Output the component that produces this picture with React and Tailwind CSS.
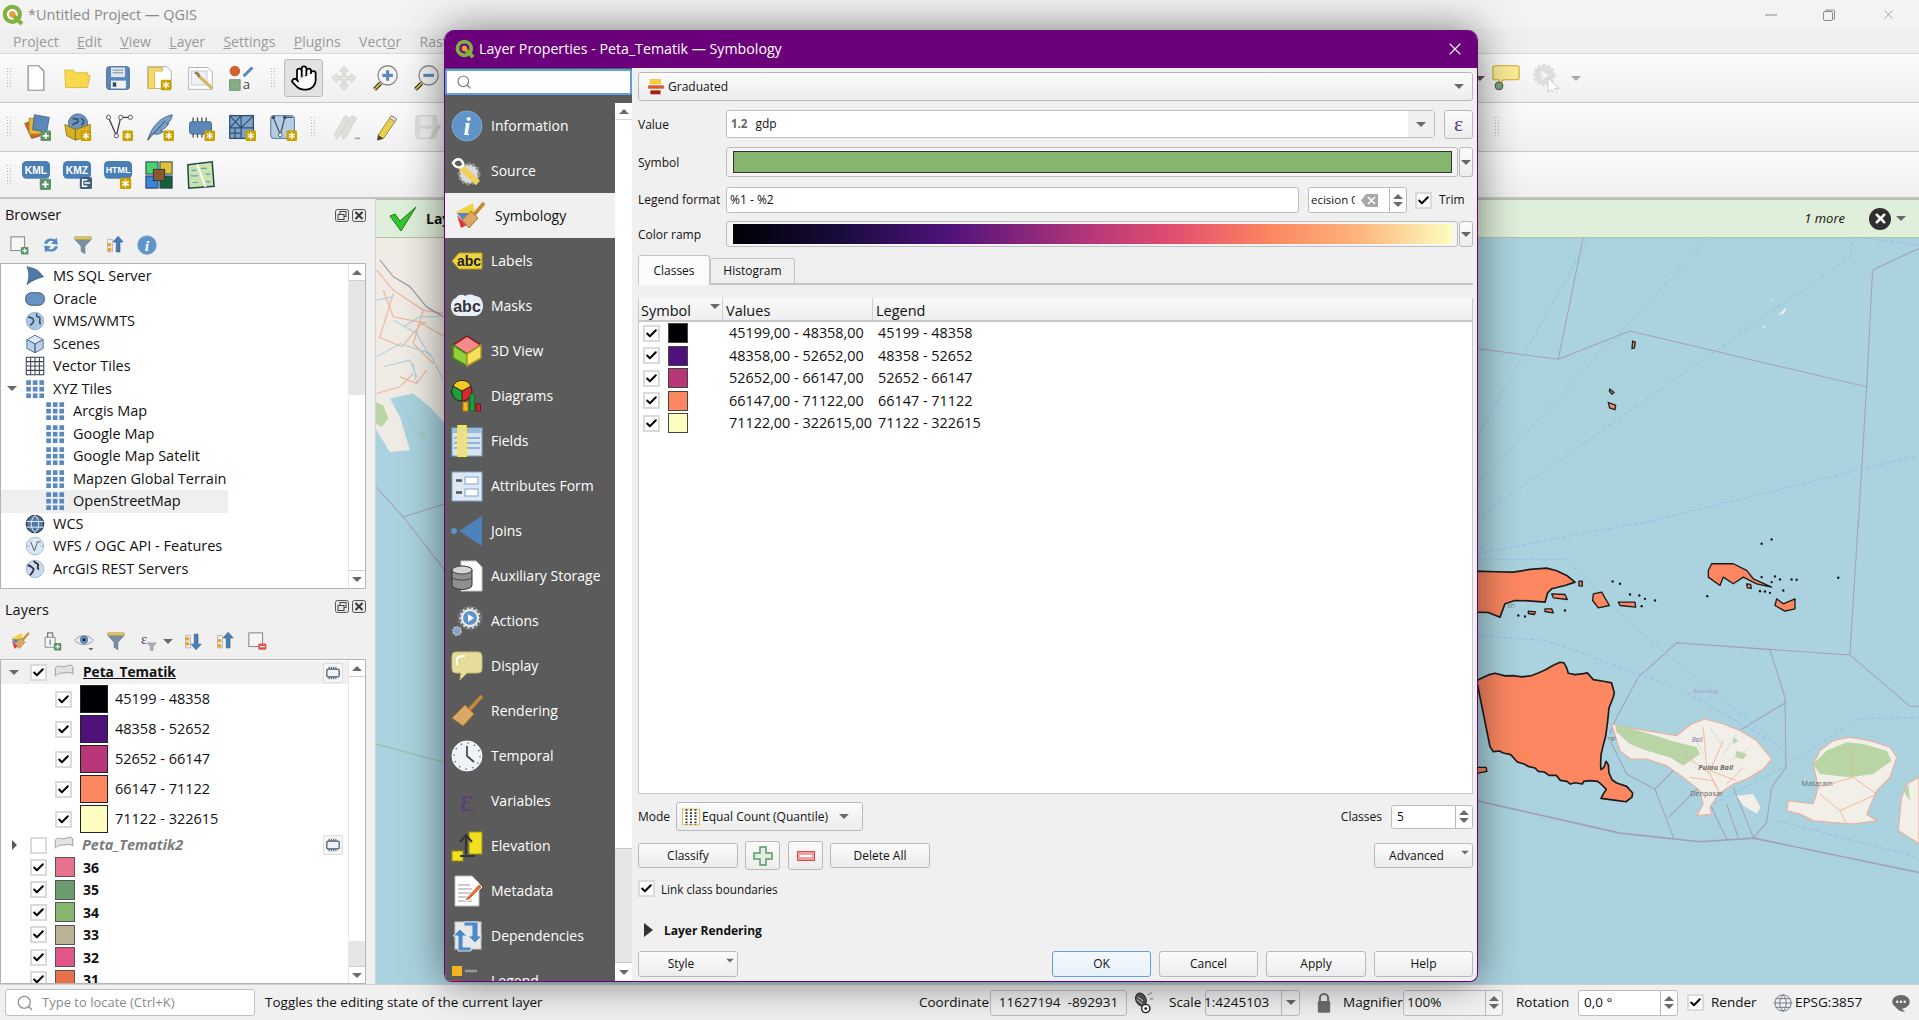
import React from 'react';
import { Hand, Check, Search, X } from 'lucide-react';

const Svg = ({ s = 28, children }) => (
  <svg width={s} height={s} viewBox="0 0 32 32" className="shrink-0">{children}</svg>
);

// small badges used on the toolbar icons
const Star = ({ x = 20, y = 20 }) => (
  <g transform={`translate(${x} ${y})`}>
    <rect width="12" height="12" rx="1.5" fill="#c9a200" />
    <path d="M6 2v8M2.5 4l7 4M9.5 4l-7 4" stroke="#fff" strokeWidth="1.6" />
  </g>
);
const Plus = ({ x = 20, y = 20 }) => (
  <g transform={`translate(${x} ${y})`}>
    <rect width="12" height="12" rx="1.5" fill="#5e9468" />
    <path d="M6 2.5v7M2.5 6h7" stroke="#fff" strokeWidth="2" />
  </g>
);

const icons = {
  newFile: <path d="M7 2h12l6 6v22H7z" fill="#fff" stroke="#8c8c8c" strokeWidth="1.4" />,
  open: <path d="M3 27 2 7h10l2 3h14v3h3l-3 14z" fill="#f9d94c" stroke="#d9b73a" />,
  save: (
    <g>
      <rect x="3" y="3" width="26" height="26" rx="3" fill="#5b88b8" stroke="#3d668f" />
      <rect x="8" y="4" width="16" height="11" fill="#dfe6ee" />
      <path d="M10 7h12M10 10h12" stroke="#6a7f95" />
      <rect x="8" y="19" width="17" height="9" fill="#f3f3f3" />
      <rect x="10" y="21" width="4" height="5" fill="#2f4e6e" />
    </g>
  ),
  print: (
    <g>
      <path d="M3 3h22l5 5v20H3z" fill="#fff" stroke="#aaa" />
      <path d="M4 4h16v4h-9v20H4z" fill="#f5d96b" stroke="#d6b23a" />
      <Star x={18} y={18} />
    </g>
  ),
  layoutMgr: (
    <g>
      <path d="M3 4h22l5 5v20H3z" fill="#fff" stroke="#aaa" />
      <rect x="6" y="8" width="18" height="16" fill="#eef3fa" stroke="#b9c8dc" />
      <path d="m11 9 4 5 15 14" stroke="#d9b866" strokeWidth="4" fill="none" />
      <path d="m10 10 4 1 1 4" stroke="#6f6f6f" strokeWidth="2" fill="none" />
    </g>
  ),
  style: (
    <g>
      <circle cx="9" cy="8" r="6" fill="#d2622f" />
      <path d="m19 14 10-10" stroke="#5b88b8" strokeWidth="3.5" />
      <rect x="3" y="18" width="12" height="12" fill="#86ad87" stroke="#648d66" />
      <text x="18" y="29" fontSize="15" fill="#444" fontFamily="Open Sans">a</text>
    </g>
  ),
  pan: (
    <path d="M16 2l5 6h-3v6h6v-3l6 5-6 5v-3h-6v6h3l-5 6-5-6h3v-6H8v3l-6-5 6-5v3h6V8h-3z" fill="#e3e3de" stroke="#cfcfcf" />
  ),
  zoomIn: (
    <g>
      <circle cx="19" cy="13" r="11" fill="#f4f4f4" stroke="#8d8d8d" strokeWidth="1.5" />
      <path d="M19 7v12M13 13h12" stroke="#5b88b8" strokeWidth="3.5" />
      <path d="m4 29 7-7" stroke="#222" strokeWidth="4.5" />
      <path d="m4 29 7-7" stroke="#e3bd3c" strokeWidth="2.2" />
    </g>
  ),
  zoomOut: (
    <g>
      <circle cx="19" cy="13" r="11" fill="#f4f4f4" stroke="#8d8d8d" strokeWidth="1.5" />
      <path d="M13 13h12" stroke="#5b88b8" strokeWidth="3.5" />
      <path d="m4 29 7-7" stroke="#222" strokeWidth="4.5" />
      <path d="m4 29 7-7" stroke="#e3bd3c" strokeWidth="2.2" />
    </g>
  ),
  addLayer: (
    <g>
      <path d="m2 12 12-4 6 18-10 3z" fill="#d2622f" stroke="#a34a22" />
      <rect x="7" y="6" width="14" height="18" fill="#e3b931" stroke="#b08f20" />
      <path d="m13 2 17 3-3 17-16-3z" fill="#5b88b8" stroke="#3d668f" />
      <Plus />
    </g>
  ),
  box: (
    <g>
      <circle cx="16" cy="12" r="11" fill="#6f93bf" stroke="#3d668f" />
      <path d="M10 6c3 2 6-1 6 3s-5 1-6 5M20 6c3 3 4 4 0 8" stroke="#34506f" strokeWidth="2" fill="none" />
      <path d="M1 13l12 6v12L3 26zM13 19l17-6v13L13 31z" fill="#d9b122" stroke="#8d7310" />
      <Star x={19} y={20} />
    </g>
  ),
  vertex: (
    <g>
      <path d="M4 5l9 21 5-21h11" stroke="#444" strokeWidth="1.5" fill="none" />
      <circle cx="4" cy="5" r="2.4" fill="#fff" stroke="#444" />
      <circle cx="13" cy="26" r="2.4" fill="#fff" stroke="#444" />
      <circle cx="18" cy="5" r="2.4" fill="#fff" stroke="#444" />
      <circle cx="29" cy="5" r="2.4" fill="#fff" stroke="#444" />
      <Star x={20} y={20} />
    </g>
  ),
  feather: (
    <g>
      <path d="M2 31C6 16 16 5 30 2c-1 7-4 9-7 10l3 0c-3 5-6 7-10 8l4 1c-5 4-9 4-13 2z" fill="#7ca0c9" stroke="#3d668f" />
      <path d="M2 31 22 9" stroke="#24405f" />
      <Star x={20} y={20} />
    </g>
  ),
  chip: (
    <g>
      <rect x="3" y="10" width="25" height="14" rx="2" fill="#5b88b8" stroke="#3d668f" />
      <path d="M7 5v5M12 5v5M17 5v5M22 5v5M7 24v4M12 24v4M17 24v4" stroke="#444" strokeWidth="1.4" />
      <Star x={20} y={20} />
    </g>
  ),
  mesh: (
    <g>
      <rect x="2" y="3" width="27" height="26" fill="#7ea3c9" stroke="#2e4f73" strokeWidth="1.5" />
      <path d="M2 17h27M15 3v26M2 3l13 14M15 3 2 17M15 17 29 3M2 23h13M8 17v12" stroke="#2e4f73" strokeWidth="1.4" />
      <Star x={20} y={20} />
    </g>
  ),
  virtual: (
    <g>
      <rect x="2" y="3" width="27" height="26" rx="3" fill="#b6cce3" stroke="#3d668f" />
      <path d="M5 5l8 20 5-20h9" stroke="#3d4f63" strokeWidth="1.4" fill="none" />
      <circle cx="5" cy="5" r="2" fill="#3d4f63" />
      <circle cx="13" cy="25" r="2.2" fill="#fff" stroke="#3d4f63" />
      <circle cx="18" cy="5" r="2" fill="#3d4f63" />
      <Star x={20} y={20} />
    </g>
  ),
  editAll: (
    <g>
      <path d="M5 30 3 24 15 3l5 3L8 27zM13 30l-2-6L23 3l5 3-12 21z" fill="#dfdfdc" stroke="#d0d0cc" />
      <path d="M26 29h6" stroke="#a8a8a8" strokeWidth="2" />
    </g>
  ),
  pencil: (
    <g>
      <path d="M6 25 21 3l6 4-15 22-7 2z" fill="#ecd04d" stroke="#8b7a29" />
      <path d="m21 3 6 4-2 3-6-4z" fill="#ddd" stroke="#888" />
      <path d="M5 31l1-6 6 4z" fill="#444" />
    </g>
  ),
  saveEdits: (
    <g>
      <rect x="2" y="3" width="24" height="26" rx="3" fill="#e2e2e0" stroke="#d2d2d0" />
      <rect x="7" y="4" width="14" height="10" fill="#f3f3f3" />
      <rect x="7" y="18" width="14" height="10" fill="#f3f3f3" />
      <path d="m18 30 2-6 8-11 3 2-9 12z" fill="#d4d2cb" />
    </g>
  ),
  kml: (
    <g>
      <rect x="1" y="1" width="30" height="19" rx="5" fill="#4a7fb5" />
      <text x="16" y="15" fontSize="11" fontWeight="700" textAnchor="middle" fill="#fff" fontFamily="Liberation Sans">KML</text>
      <Plus x={20} y={20} />
    </g>
  ),
  kmz: (
    <g>
      <rect x="1" y="1" width="30" height="19" rx="5" fill="#4a7fb5" />
      <text x="16" y="15" fontSize="11" fontWeight="700" textAnchor="middle" fill="#fff" fontFamily="Liberation Sans">KMZ</text>
      <rect x="19" y="18" width="13" height="13" rx="2" fill="#3f5f7f" />
      <path d="M27 21h-5v7h5M24 24.500h6" stroke="#fff" strokeWidth="1.6" fill="none" />
    </g>
  ),
  html: (
    <g>
      <rect x="1" y="1" width="30" height="19" rx="5" fill="#4a7fb5" />
      <text x="16" y="14" fontSize="9.500" fontWeight="700" textAnchor="middle" fill="#fff" fontFamily="Liberation Sans">HTML</text>
      <Star x={18} y={19} />
    </g>
  ),
  quad: (
    <g>
      <rect x="2" y="2" width="13" height="13" fill="#4fd06a" stroke="#22384f" />
      <rect x="17" y="2" width="13" height="13" fill="#e0c23b" stroke="#22384f" />
      <rect x="2" y="17" width="13" height="13" fill="#3a83d6" stroke="#22384f" />
      <rect x="17" y="17" width="13" height="13" fill="#16603a" stroke="#22384f" />
      <rect x="10" y="10" width="12" height="12" fill="#8a5a2e" stroke="#22384f" />
    </g>
  ),
  mapGrid: (
    <g>
      <path d="m3 5 26-3 2 26-27 2z" fill="#c9e3a9" stroke="#22474f" strokeWidth="1.6" />
      <path d="m13 5 9 24" stroke="#fff" strokeWidth="2" />
      <path d="M7 11h5M17 9h6M6 17h8M22 15h5M8 24h6M22 23h5" stroke="#54a0d0" strokeWidth="1.3" />
    </g>
  ),
  comment: (
    <g>
      <path d="M3 2h26a2 2 0 0 1 2 2v12a2 2 0 0 1-2 2H13l-5 5v-5H3a2 2 0 0 1-2-2V4a2 2 0 0 1 2-2z" fill="#faeb98" stroke="#cfa92c" strokeWidth="1.3" />
      <circle cx="8" cy="25" r="4.500" fill="#76a878" stroke="#444" />
    </g>
  ),
  gearRun: (
    <g>
      <circle cx="13" cy="13" r="10" fill="#dcdee2" stroke="#dcdcdc" strokeWidth="4" strokeDasharray="3 2" />
      <path d="m10 8 8 5-8 5z" fill="#f4f4f4" />
      <path d="m17 16 12 11-5 0 3 5-3 1-3-5-4 3z" fill="#fff" stroke="#c8c8c8" />
    </g>
  ),
  newLayer: (
    <g>
      <rect x="3" y="3" width="22" height="22" fill="#f6f6f6" stroke="#7d7d7d" strokeWidth="1.5" />
      <Plus x={19} y={19} />
    </g>
  ),
  removeLayer: (
    <g>
      <rect x="3" y="3" width="22" height="22" fill="#f6f6f6" stroke="#7d7d7d" strokeWidth="1.5" />
      <rect x="18" y="20" width="13" height="10" rx="2" fill="#e2504f" />
      <path d="M20.500 25h8" stroke="#fff" strokeWidth="2" />
    </g>
  ),
  addGroup: (
    <g>
      <path d="M5 10h16v16H5z" fill="#f2f2f2" stroke="#8a8a8a" strokeWidth="1.500" />
      <path d="M9 10V3h8v7M13 14v8" stroke="#6a7d90" strokeWidth="2" fill="none" />
      <Plus x={19} y={19} />
    </g>
  ),
  eye: (
    <g>
      <path d="M1 15c8-10 22-10 30 0-8 9-22 9-30 0z" fill="#e9edf1" stroke="#9a9a9a" strokeWidth="1.500" />
      <circle cx="16" cy="14" r="6" fill="#5f93c9" stroke="#3f5f7f" />
      <circle cx="16" cy="14" r="2.500" fill="#222" />
      <path d="M23 27h8l-4 4z" fill="#666" />
    </g>
  ),
  exprFilter: (
    <g>
      <text x="10" y="20" fontSize="24" textAnchor="middle" fill="#5c3a7e" fontFamily="Liberation Serif">ε</text>
      <path d="M15 19h14l-5 6v6h-4v-6z" fill="#b2b2b2" stroke="#8c8c8c" />
    </g>
  ),
  refresh: (
    <g>
      <path d="M5 14C6 7 14 3 22 7l3-3 2 11-11-1 4-4c-4-2-8-1-10 4z" fill="#4f8ac7" />
      <path d="M27 18c-1 7-9 11-17 7l-3 3-2-11 11 1-4 4c4 2 8 1 10-4z" fill="#4f8ac7" />
    </g>
  ),
  filter: (
    <g>
      <path d="M3 3h26v4L19 18v12l-6-4v-8L3 7z" fill="#7b8fa3" stroke="#5a6c7e" />
      <rect x="3" y="3" width="26" height="4" fill="#e7c43a" />
    </g>
  ),
  collapse: (
    <g>
      <path d="M4 7h8v20H4z" fill="#eee" stroke="#a0a0a0" />
      <rect x="4" y="13" width="6" height="5" fill="#eaa32a" />
      <rect x="4" y="21" width="6" height="5" fill="#eaa32a" />
      <path d="M21 2l8 9h-5v16h-6V11h-5z" fill="#4a7fb5" stroke="#2f5a85" />
    </g>
  ),
  expand: (
    <g>
      <path d="M4 7h8v20H4z" fill="#eee" stroke="#a0a0a0" />
      <rect x="4" y="10" width="6" height="5" fill="#eaa32a" />
      <rect x="4" y="18" width="6" height="5" fill="#eaa32a" />
      <path d="M21 30l8-9h-5V5h-6v16h-5z" fill="#4a7fb5" stroke="#2f5a85" />
    </g>
  ),
  info: (
    <g>
      <circle cx="16" cy="16" r="15" fill="#5f93c9" stroke="#87a9cc" />
      <text x="16" y="25" fontSize="25" fontWeight="700" fontStyle="italic" textAnchor="middle" fill="#fff" fontFamily="Liberation Serif">i</text>
    </g>
  ),
  source: (
    <g>
      <circle cx="18" cy="19" r="10" fill="#dadada" stroke="#8d8d8d" strokeWidth="3" strokeDasharray="3 2" />
      <path d="m10 12 17 16" stroke="#f0d055" strokeWidth="6" />
      <path d="M2 8c3-5 8-5 10 0 1 2 0 3-2 4-4 1-6 0-8-4z" fill="none" stroke="#fff" strokeWidth="2.5" />
    </g>
  ),
  brush: (
    <g>
      <path d="M2 12 19 3l2 12-9 10z" fill="#eed53f" />
      <path d="M3 13l15 0-6 12z" fill="#5a84c7" />
      <path d="M3 15l9 10 5-2-10 5z" fill="#e2333c" />
      <path d="m19 16 11-13" stroke="#c98932" strokeWidth="3.5" />
      <path d="m8 20 9-9 7 7-9 10z" fill="#dba767" stroke="#a9762f" />
    </g>
  ),
  labels: (
    <g>
      <path d="M1 16 8 8h23v16H8z" fill="#eed53f" stroke="#b59a1d" />
      <text x="18" y="21" fontSize="14" fontWeight="700" textAnchor="middle" fill="#222" fontFamily="Liberation Sans">abc</text>
    </g>
  ),
  masks: (
    <g>
      <path d="M5 8c2-4 7-4 9-2 3-2 7-2 10 0 5 0 8 4 8 10s-4 10-8 10H8c-5 0-8-4-8-10 0-4 2-7 5-8z" fill="#eaf0fb" />
      <text x="16" y="22" fontSize="16" fontWeight="700" textAnchor="middle" fill="#333" fontFamily="Liberation Sans">abc</text>
    </g>
  ),
  view3d: (
    <g>
      <path d="M16 1 30 10 16 19 2 10z" fill="#f58a8a" stroke="#8b1a1a" strokeWidth="1.5" />
      <path d="M2 10l14 9v12L2 23z" fill="#8fd13c" stroke="#4e7f1a" strokeWidth="1.5" />
      <path d="m30 10-14 9v12l14-8z" fill="#f6e257" stroke="#b3952a" strokeWidth="1.5" />
    </g>
  ),
  diagrams: (
    <g>
      <circle cx="11" cy="11" r="10" fill="#d92a2a" stroke="#222" />
      <path d="M11 11 2 6a10 10 0 0 0 9 15z" fill="#1f9e3f" stroke="#222" />
      <path d="M11 11 2 6a10 10 0 0 1 18 0z" fill="#f3cb22" stroke="#222" />
      <rect x="12" y="22" width="5" height="9" fill="#f3b61f" stroke="#a87d10" />
      <rect x="19" y="14" width="4.500" height="17" fill="#1f9e3f" stroke="#0f6a27" />
      <rect x="25" y="24" width="4.500" height="7" fill="#c3272b" stroke="#7c1518" />
    </g>
  ),
  fields: (
    <g>
      <rect x="1" y="3" width="30" height="28" fill="#d6e3f2" stroke="#7da3cc" />
      <rect x="1" y="3" width="30" height="5" fill="#9cbadb" />
      <path d="M15 13h14M15 18h14M15 23h14M3 13h3M3 18h3M3 23h3" stroke="#7da3cc" strokeWidth="1.4" />
      <rect x="7" y="0.500" width="8" height="31" fill="#ecdd96" stroke="#f5ee3d" strokeWidth="1.6" />
    </g>
  ),
  attrForm: (
    <g>
      <rect x="1" y="2" width="30" height="29" fill="#dde8f4" stroke="#7da3cc" />
      <rect x="14" y="7" width="13" height="7" fill="#fff" stroke="#7da3cc" />
      <rect x="14" y="19" width="13" height="7" fill="#fff" stroke="#7da3cc" />
      <path d="M5 10.500h6M5 22.500h6" stroke="#4a5560" strokeWidth="2.6" />
    </g>
  ),
  joins: (
    <g>
      <path d="M31 1v30L8 16z" fill="#4f82bd" />
      <circle cx="3" cy="16" r="3" fill="#5f93c9" />
    </g>
  ),
  aux: (
    <g>
      <path d="M10 1h15l6 6v24H10z" fill="#fff" stroke="#c8c8c8" />
      <path d="M1 10c0-5 20-5 20 0v15c0 6-20 6-20 0z" fill="#8f8f8f" stroke="#333" />
      <ellipse cx="11" cy="10" rx="10" ry="4" fill="#d4d4d4" stroke="#444" />
      <path d="M1 17c0 4 20 4 20 0" fill="none" stroke="#444" />
    </g>
  ),
  actions: (
    <g>
      <circle cx="19" cy="13" r="11" fill="#dcdcdc" stroke="#6e6e6e" strokeWidth="3.500" strokeDasharray="3 2" />
      <circle cx="19" cy="13" r="7.500" fill="#5f93c9" stroke="#fff" />
      <path d="m17 9 6 4-6 4z" fill="#fff" />
      <circle cx="6" cy="26" r="4" fill="#7fa4cc" stroke="#bbb" strokeWidth="2" strokeDasharray="2 1" />
    </g>
  ),
  display: (
    <g>
      <path d="M5 2h22a4 4 0 0 1 4 4v13a4 4 0 0 1-4 4H16l-7 7 1-7H5a4 4 0 0 1-4-4V6a4 4 0 0 1 4-4z" fill="#e6dc9b" stroke="#c6ba72" />
      <path d="M6 15V9c0-2 2-3 8-3" stroke="#fff" strokeWidth="2" fill="none" />
    </g>
  ),
  rendering: (
    <g>
      <path d="m18 15 13-14" stroke="#c98932" strokeWidth="3.500" />
      <path d="m1 23 13-13 9 9-11 12z" fill="#dba767" stroke="#a9762f" />
    </g>
  ),
  clock: (
    <g>
      <circle cx="16" cy="16" r="15" fill="#eff3f8" stroke="#fff" />
      <circle cx="16" cy="16" r="13" fill="none" stroke="#5f7fa8" strokeWidth="1.5" strokeDasharray="1.5 5.300" />
      <path d="M16 6v10l7 6" stroke="#444" strokeWidth="1.700" fill="none" />
    </g>
  ),
  variables: (
    <text x="16" y="26" fontSize="32" textAnchor="middle" fill="#5c3a7e" fontFamily="Liberation Serif">ε</text>
  ),
  elevation: (
    <g>
      <rect x="18" y="2" width="13" height="22" fill="#f2df1e" stroke="#a08d10" />
      <rect x="1" y="21" width="11" height="10" fill="#f2df1e" stroke="#a08d10" />
      <path d="M15 24V6M9 12l6-7 6 7M9 26h15" stroke="#333" strokeWidth="2" fill="none" />
    </g>
  ),
  metadata: (
    <g>
      <path d="M4 1h17l7 7v23H4z" fill="#fff" stroke="#bbb" />
      <path d="M7 10h12M7 14h14M7 18h14M7 22h10M7 26h14" stroke="#999" strokeWidth="1.2" />
      <path d="m15 23 13-14 3 3-13 13-4 1z" fill="#e0703a" stroke="#fff" />
    </g>
  ),
  deps: (
    <g>
      <rect x="4" y="2" width="26" height="27" fill="#e8e8e8" stroke="#c8c8c8" />
      <path d="M7 31V16H2l7-7 7 7h-4v11h8v4z" fill="#4f8ac7" stroke="#d7e6f5" />
      <path d="M27 2v14h4l-7 7-7-7h4V6h-8V2z" fill="#4f8ac7" stroke="#d7e6f5" />
    </g>
  ),
  legend: (
    <g>
      <rect x="1" y="1" width="10" height="10" fill="#f3b61f" />
      <path d="M14 6h12M14 20h12" stroke="#999" strokeWidth="2.500" />
      <rect x="1" y="15" width="10" height="10" fill="#e0401c" />
    </g>
  ),
  mssql: <path d="M3 1c8 2 18 4 22 11 3 4 4 4 5 5-9 2-19 6-27 13 3-9 5-19 0-29z" fill="#4f79a8" stroke="#2f5178" />,
  oracle: <rect x="1" y="6" width="30" height="20" rx="9" fill="#6a92c1" stroke="#2f5178" strokeWidth="1.5" />,
  wms: (
    <g>
      <circle cx="16" cy="16" r="14" fill="#a9c6e5" stroke="#7c9cc0" />
      <path d="M5 9c4 3 5 0 8 4s-2 8-5 10M19 4c-2 5 1 5 4 6s-2 9 2 11" stroke="#3b4a58" strokeWidth="2.500" fill="none" />
    </g>
  ),
  scenes: (
    <g>
      <path d="M16 2 29 9 16 16 3 9z" fill="#dfe9f4" stroke="#4c6a8a" strokeWidth="1.5" />
      <path d="M3 9l13 7v14L3 23zM29 9l-13 7v14l13-7z" fill="#bcd1e8" stroke="#4c6a8a" strokeWidth="1.5" />
    </g>
  ),
  vtiles: (
    <g fill="none" stroke="#3b4653" strokeWidth="1.7">
      <rect x="2" y="2" width="28" height="28" />
      <path d="M9 2v28M16 2v28M23 2v28M2 9h28M2 16h28M2 23h28" />
    </g>
  ),
  xyz: (
    <g fill="#5b88c0">
      {[2, 12.500, 23].map((x) =>
        [2, 12.500, 23].map((y) => <rect key={`${x}-${y}`} x={x} y={y} width="7.500" height="7.500" />)
      )}
    </g>
  ),
  wcs: (
    <g>
      <circle cx="16" cy="16" r="14" fill="#4f79a8" stroke="#28323c" strokeWidth="1.8" />
      <path d="M2 12h28M2 21h28M16 2c-8 8-8 20 0 28M16 2c8 8 8 20 0 28" stroke="#e9eef5" strokeWidth="1.6" fill="none" />
    </g>
  ),
  wfs: (
    <g>
      <circle cx="16" cy="16" r="14" fill="#dbe8f5" stroke="#7c9cc0" />
      <path d="m9 9 6 15 5-15 5 1" stroke="#55636f" strokeWidth="1.6" fill="none" />
      <path d="M2 16h6M24 16h6" stroke="#7c9cc0" />
    </g>
  ),
  arcgis: (
    <g>
      <circle cx="16" cy="16" r="14" fill="#c9dcf0" stroke="#7c9cc0" />
      <path d="M4 10c5 0 6 3 9 5s-4 10-5 11M14 3c2 4 6 3 7 6s-3 3 1 8" stroke="#333" strokeWidth="3" fill="none" />
    </g>
  ),
  polygon: <path d="M2 8c5-6 9-1 14-2s11-5 14 0v12c-3-5-9-2-14-2s-9 0-14 5z" fill="#e2e2e2" stroke="#9b9b9b" strokeWidth="1.500" />,
  chipSmall: (
    <g>
      <rect x="5" y="9" width="22" height="14" rx="2.500" fill="#eef3f7" stroke="#4b5a69" strokeWidth="2.200" />
      <path d="M9 5v4M13 5v4M17 5v4M21 5v4M9 23v4M13 23v4M17 23v4M21 23v4" stroke="#4b5a69" strokeWidth="1.800" />
    </g>
  ),
  mouseOff: (
    <g>
      <ellipse cx="13" cy="11" rx="7.500" ry="10" transform="rotate(-25 13 11)" fill="#555" stroke="#111" />
      <path d="M8 7l8 6M7 11l8 6" stroke="#eee" strokeWidth="1.300" />
      <circle cx="20" cy="24" r="6" fill="#fff" stroke="#222" strokeWidth="2" />
      <circle cx="20" cy="24" r="2" fill="#222" />
      <path d="M23 4l6-3M26 10l5 0" stroke="#444" />
    </g>
  ),
  lock: (
    <g>
      <rect x="7" y="13" width="18" height="17" rx="2" fill="#6d6d6d" />
      <path d="M10 14V9a6 6 0 0 1 12 0v5" fill="none" stroke="#6d6d6d" strokeWidth="3" />
    </g>
  ),
  globe: (
    <g fill="none" stroke="#6c7782" strokeWidth="1.500">
      <circle cx="16" cy="16" r="13" />
      <path d="M1 16h30M4 9h24M4 23h24M16 3c-7 7-7 19 0 26M16 3c7 7 7 19 0 26" />
    </g>
  ),
  chat: (
    <g>
      <path d="M16 3c8 0 14 5 14 11s-6 11-13 11l6 5c-7 0-12-3-15-7-3-2-6-5-6-9C2 8 8 3 16 3z" fill="#6a6a6a" />
      <circle cx="10" cy="14" r="2" fill="#fff" />
      <circle cx="16" cy="14" r="2" fill="#fff" />
      <circle cx="22" cy="14" r="2" fill="#fff" />
    </g>
  ),
  graduated: (
    <g>
      <rect x="6" y="3" width="18" height="7" fill="#f7d02c" stroke="#e8a91c" />
      <rect x="2" y="13" width="28" height="6" fill="#e3561f" />
      <rect x="6" y="22" width="18" height="7" fill="#a81b13" />
    </g>
  ),
  quantile: (
    <g>
      <rect x="1" y="2" width="30" height="28" fill="#fff" stroke="#d4b52a" strokeWidth="1.500" />
      <path d="M8 2v28M16 2v28M24 2v28" stroke="#2f2f2f" strokeWidth="3.500" strokeDasharray="3 2.500" />
    </g>
  ),
};

const Icon = ({ name, s = 28 }) => <Svg s={s}>{icons[name]}</Svg>;

const Grip = () => (
  <div className="w-[5px] h-[22px] shrink-0 bg-[radial-gradient(#b4b4b4_1px,transparent_1px)] bg-[length:3px_3px]" />
);

const Arrow = ({ dir = 'down', color = 'border-t-[#6a6a6a]' }) =>
  dir === 'down' ? (
    <span className={`block w-0 h-0 border-x-[5px] border-x-transparent border-t-[5px] ${color}`} />
  ) : dir === 'up' ? (
    <span className="block w-0 h-0 border-x-[5px] border-x-transparent border-b-[5px] border-b-[#6a6a6a]" />
  ) : (
    <span className="block w-0 h-0 border-y-[5px] border-y-transparent border-l-[5px] border-l-[#5a5a5a]" />
  );

const Tool = ({ name, s = 28 }) => (
  <div className="w-[41px] shrink-0 flex justify-center items-center">
    <Icon name={name} s={s} />
  </div>
);

const CheckBox = ({ on = true, s = 'w-[17px] h-[17px]' }) => (
  <span className={`${s} shrink-0 bg-white border-2 border-[#dadada] flex items-center justify-center`}>
    {on && <Check size={15} strokeWidth={3.6} className="text-black" />}
  </span>
);

const Btn = ({ className = '', children }) => (
  <div className={`flex items-center justify-center shrink-0 border border-[#b9b9b9] rounded-[3px] bg-linear-to-b from-[#fbfbfb] to-[#ededed] text-[12px] text-[#111] ${className}`}>
    {children}
  </div>
);

const Spin = () => (
  <div className="w-[17px] h-full border-l border-[#b9b9b9] flex flex-col items-center justify-center gap-[3px] shrink-0">
    <Arrow dir="up" />
    <Arrow />
  </div>
);

const browserRows = [
  ['mssql', 'MS SQL Server', 0],
  ['oracle', 'Oracle', 0],
  ['wms', 'WMS/WMTS', 0],
  ['scenes', 'Scenes', 0],
  ['vtiles', 'Vector Tiles', 0],
  ['xyz', 'XYZ Tiles', 0, true],
  ['xyz', 'Arcgis Map', 1],
  ['xyz', 'Google Map', 1],
  ['xyz', 'Google Map Satelit', 1],
  ['xyz', 'Mapzen Global Terrain', 1],
  ['xyz', 'OpenStreetMap', 1],
  ['wcs', 'WCS', 0],
  ['wfs', 'WFS / OGC API - Features', 0],
  ['arcgis', 'ArcGIS REST Servers', 0],
];

const classes = [
  ['#000004', '45199,00 - 48358,00', '45199 - 48358'],
  ['#4f127b', '48358,00 - 52652,00', '48358 - 52652'],
  ['#b73779', '52652,00 - 66147,00', '52652 - 66147'],
  ['#fc8761', '66147,00 - 71122,00', '66147 - 71122'],
  ['#fcfdbf', '71122,00 - 322615,00', '71122 - 322615'],
];

const layerRows = [
  ['#e8718d', '36'],
  ['#6e9a6f', '35'],
  ['#86b56f', '34'],
  ['#bcb295', '33'],
  ['#e0568a', '32'],
  ['#e8734a', '31'],
];

const pages = [
  ['info', 'Information'],
  ['source', 'Source'],
  ['brush', 'Symbology'],
  ['labels', 'Labels'],
  ['masks', 'Masks'],
  ['view3d', '3D View'],
  ['diagrams', 'Diagrams'],
  ['fields', 'Fields'],
  ['attrForm', 'Attributes Form'],
  ['joins', 'Joins'],
  ['aux', 'Auxiliary Storage'],
  ['actions', 'Actions'],
  ['display', 'Display'],
  ['rendering', 'Rendering'],
  ['clock', 'Temporal'],
  ['variables', 'Variables'],
  ['elevation', 'Elevation'],
  ['metadata', 'Metadata'],
  ['deps', 'Dependencies'],
  ['legend', 'Legend'],
];

const QgisLogo = ({ s = 20 }) => (
  <svg width={s} height={s} viewBox="0 0 32 32" className="shrink-0">
    <circle cx="15" cy="15" r="11" fill="none" stroke="#7fb241" strokeWidth="6" />
    <path d="m17 17 12 12" stroke="#7fb241" strokeWidth="6" />
    <circle cx="15" cy="15" r="4.500" fill="#ef9a2d" />
  </svg>
);

const DockButtons = () => (
  <div className="flex gap-[3px] ml-auto">
    <svg width="14" height="13" viewBox="0 0 14 13">
      <rect x=".5" y=".5" width="13" height="12" rx="2" fill="#e8e8e8" stroke="#555" />
      <rect x="5" y="2.500" width="6" height="5" fill="none" stroke="#444" />
      <rect x="3" y="5.500" width="6" height="5" fill="#e8e8e8" stroke="#444" />
    </svg>
    <svg width="14" height="13" viewBox="0 0 14 13">
      <rect x=".5" y=".5" width="13" height="12" rx="2" fill="#e8e8e8" stroke="#555" />
      <path d="m3.500 3 7 7M10.500 3l-7 7" stroke="#333" strokeWidth="1.800" />
    </svg>
  </div>
);

function MapCanvas() {
  const line = { fill: 'none', stroke: '#a59db8', strokeWidth: 5 };
  const dash = { fill: 'none', stroke: '#93b8e6', strokeWidth: 2.5, strokeDasharray: '12 8' };
  const fine = { fill: 'none', stroke: '#a59db8', strokeWidth: 3 };
  const land = { fill: '#fc8761', stroke: '#1c1c1c', strokeWidth: 5, strokeLinejoin: 'round' };
  const dots = [[145,285],[165,288],[285,270],[428,183],[450,190],[480,222],[508,225],[525,235],[555,240],[515,257],[712,227],[875,70],[905,57],[875,170],[915,168],[930,177],[965,177],[980,178],[1105,172],[905,185],[940,210],[870,212],[885,213],[900,217]];
  return (
    <svg className="absolute inset-0 w-full h-full" viewBox="376 238 1543 745" preserveAspectRatio="none">
      <defs>
        <filter id="soft"><feGaussianBlur stdDeviation="1.200" /></filter>
      </defs>
      {/* far west corner of the map */}
      <g transform="translate(0 260) scale(.3333)">
        <path d="M1128-70h212v565l-50-55-50-40-70 15 30 55 30 100-60 5-40-65h-2z" fill="#f0ece5" />
        <path d="M1128 425l22 10 15 40-20 25-17-10z" fill="#b7d6a3" />
        <g filter="url(#soft)" fill="none">
          <path d="M1130 30l50 60 90 60 60 10M1150 90l30 80 100 20M1135 230l70 30 60-70 70 40M1180 100l-40 130M1270 150l-30 100 60 60M1200 350l50 20 30-40M1130 400l70-20 40-40" stroke="#f1b69c" strokeWidth="3.500" />
          <path d="M1140 0l40 50 50 30 50 60 50 30" stroke="#8e8ca0" strokeWidth="3" />
          <path d="M1130 290l70-40 90 30 40 80M1180 180l70 40 40 70M1210 200l50-30 60 0M1150 320l80-20 20 50M1240 310l10 60M1130 120l50-10" stroke="#a8d0e0" strokeWidth="3" />
        </g>
        <path d="M1128 680l82 90 125 160M1210 770l125-40" {...fine} />
        <path d="M1200 420l30 60 40 70" fill="none" stroke="#93b8e6" strokeWidth="2" strokeDasharray="6 5" />
        <path d="M1260 510l18 18-2 12-16-14z" fill="#a8cdb0" />
        <path d="M1128 1450l205 55" fill="none" stroke="#8fbca4" strokeWidth="3" />
      </g>
      {/* top right sea */}
      <g transform="translate(1470 235) scale(.3333)">
        <path d="M20 340l245 32 215-84 710 167-25 415M1208 105l139-65M1208 105l-18 350M265 372l75-367" {...fine} />
        <path d="M20 610 360 5M20 750 720 5M20 850l1120-785 10-60 197 25M490 870l857-210" {...dash} />
        <path d="M486 340l2-22 8 3-3 18zM420 462l12 10-6 5-8-9zM415 502l22 8-2 13-16-5z" fill="#fc8761" stroke="#222" strokeWidth="4" />
        <path d="M925 240l25-25-8 20zM902 197l14-7-6 6zM876 280l12-12-4 9z" fill="#f2efe9" />
      </g>
      <g transform="translate(1470 520) scale(.3333)">
        <path d="M20 100 550 0M20 118h270l160 162 140 120 310 250 45 50M20 345l210 15 410 150 280 160M730 850l210-110 225-145 182-5M920 900l427 110" {...dash} />
        <path d="M20 840l430 97 240 26 160-11 497 103" {...line} />
        <path d="M420 640l20-50 65-120 115-103 520 36 180 154h27M1165 0l-25 403M620 367l280 21 45 142 3 210-43 60-15 105-40 47M420 660l50 100 85 45 57 150M555 805l55-55M948 545l-140 85M596 890l110-110M720 850l50 105M770 850l35 100M790 800l60 150" {...fine} />
        <g filter="url(#soft)">
          <path d="M425 610l45 10 60 10 90 15 45-35 40-15 55 15 50 20 50 30 45 55-25 30-50 30-40 15-45 30-25 40 5 20-45 5 20-35-10-40-50-40-50-35-60-20h-50l-30-25z" fill="#f2efe9" stroke="#efaa97" strokeWidth="3" />
          <path d="M435 610l105 30 80 25 60 15 10 20-50 35-40-25-70-20-50-20-40-35z" fill="#b9d5a5" />
          <path d="M800 690l30 10-10 15-25-5zM790 650l15 10-15 10z" fill="#b9d5a5" />
          <path d="M700 620l10 120 30 60M760 660l-40 90 80 30M640 700l80 60M660 770l70 10 20 40M820 740l-50 50" fill="none" stroke="#efb089" strokeWidth="2.500" />
          <path d="M720 620l40 60M800 640l-40 60M670 640l30 60M840 680l-60 40" fill="none" stroke="#b7d6e4" strokeWidth="2" />
          <path d="M800 825l50-5 22 40-12 18-40-23z" fill="#f2efe9" />
          <path d="M1030 730l20-40 40-30 50-10 60 10 60 20 20 30-20 60-40 40-30 70 30 20-70 10-60-5-60-5-40-20-40-10 5-30 75 10 15-50z" fill="#f2efe9" stroke="#efaa97" strokeWidth="3" />
          <path d="M1030 730l40-40 60-25 50 5 70 20 15 30-55 40-70 10-90-10z" fill="#b9d5a5" />
          <path d="M1050 820l60 50 20 40M1110 870l110-50M1140 680l10 90M1040 800l110-30 70 50" fill="none" stroke="#efb089" strokeWidth="2.500" />
          <path d="M1347 770l-37 20-15 40-10 100 62 38z" fill="#f2efe9" stroke="#efaa97" strokeWidth="3" />
          <path d="M1300 810l15-20 5 50z" fill="#b9d5a5" />
        </g>
        <path d="M20 480l35-17 20-5 30 8 25-1 25 4 30-4 20-8 20-9 25-14 20-9 12 2 8 15 5 16 20 4 25-3 12-2 18 20 30 5 25 5 8 30-3 12-7 18-6 15-4 40-6 45-8 30-6 25-1 30 1 15 9-7 6-18 7 10 2 25 9 20 14 10 30 10 18 20-2 12-18 14-30-4-45-6 8-15 8-12-14-14-12-10-24-2-18 2-4 8-22-4-14 4-10-8-20-3-12-15-22 0-14-10-18-2-10-10-18-4-15-8-20-6-20-22-22-5-12-6-18 2-10-15z" {...land} />
        <path d="M20 152l55 2 55 1 50-8 50-4 30 8 30 14 25 20-30 10-40 10-12 12-8 28-50-4-40-1-30 10-15 40-35-14-35-1z" {...land} />
        <path d="M370 220l25-5 23 40-33 7-17-22zM245 220l40 2 7 15-42-5zM445 245l50 0 2 15-47-5zM175 272l22 2-4 8-18-3zM225 265l20 0 5 12-25-4zM20 740l28 0 3 12-31 6zM327 182l10 0 0 15-10-1z" {...land} strokeWidth={4} />
        <path d="M715 150l10-20 65 0 40 20 20 25 55 25-45-10-40-20-30 20-30-20-10 25-35-25zM920 235l20 15 35-15 0 30-30 7-30-17zM830 190l12 2 2 12-12-2z" {...land} strokeWidth={4} />
        {dots.map(([x, y]) => <circle key={`${x}${y}`} cx={x} cy={y} r="3.500" fill="#111" />)}
        <g fontFamily="Open Sans" fontSize="22" fill="#6a6a6a">
          <text x="110" y="262" fill="#888">an</text>
          <text x="413" y="657" fontSize="17">ngi</text>
          <text x="670" y="518" fill="#b09cc4" fontSize="18">Buleleng</text>
          <text x="665" y="665" fill="#8a70a0" fontSize="20" fontStyle="italic">Bali</text>
          <text x="685" y="748" fontWeight="700" fontStyle="italic">Pulau Bali</text>
          <text x="660" y="825">Denpasar</text>
          <text x="995" y="797">Mataram</text>
        </g>
      </g>
    </svg>
  );
}

function LayerDialog() {
  return (
    <div className="absolute left-[444px] top-[30px] w-[1034px] h-[952px] flex flex-col rounded-t-[10px] rounded-b-[8px] border border-[#6b007b] border-t-0 bg-[#f0f0f0] shadow-[0_0_42px_rgba(0,0,0,0.5)] overflow-hidden">
      <div className="h-[38px] shrink-0 bg-[#6b007b] flex items-center text-white pl-[10px] pr-[12px]">
        <QgisLogo />
        <span className="ml-[4px] text-[14.2px]">Layer Properties - Peta_Tematik — Symbology</span>
        <X size={20} strokeWidth={1.3} className="ml-auto" />
      </div>
      <div className="flex flex-1 min-h-0">
        {/* page list */}
        <div className="w-[187px] shrink-0 bg-[#5b5b5b] flex flex-col">
          <div className="h-[35px] shrink-0 pt-[1px]">
            <div className="h-[26px] bg-white border-2 border-[#5ea2e0] rounded-[2px] flex items-center pl-[9px]">
              <Search size={16} strokeWidth={1.7} className="text-[#777]" />
            </div>
          </div>
          <div className="flex flex-1 min-h-0">
            <div className="flex-1 overflow-hidden">
              {pages.map(([icon, name]) => {
                const active = name === 'Symbology';
                return (
                  <div
                    key={name}
                    className={`h-[45px] flex items-center shrink-0 text-[14px] ${active ? 'bg-[#f0f0f0] text-[#111] pl-[9px]' : 'text-white pl-[6px]'}`}
                  >
                    <Icon name={icon} s={32} />
                    <span className={active ? 'ml-[9px]' : 'ml-[8px]'}>{name}</span>
                  </div>
                );
              })}
            </div>
            <div className="w-[17px] shrink-0 bg-white flex flex-col">
              <div className="h-[17px] flex items-center justify-center border-b border-[#d8d8d8]"><Arrow dir="up" /></div>
              <div className="h-[728px]" />
              <div className="flex-1 bg-[#e6e6e6] border-t border-[#c8c8c8]" />
              <div className="h-[19px] flex items-center justify-center border-t border-[#c8c8c8]"><Arrow /></div>
            </div>
          </div>
        </div>

        {/* symbology page */}
        <div className="flex-1 min-w-0 flex flex-col pl-[6px] pr-[4px] pt-[4px] text-[12px] text-[#111]">
          <Btn className="h-[29px] !justify-start pl-[8px] pr-[8px]">
            <Icon name="graduated" s={18} />
            <span className="ml-[3px] mt-[1px]">Graduated</span>
            <span className="ml-auto"><Arrow /></span>
          </Btn>

          <div className="flex items-center h-[28px] mt-[9px]">
            <span className="w-[88px] shrink-0 mt-[1px]">Value</span>
            <div className="flex-1 h-full bg-white border border-[#bdbdbd] rounded-[3px] flex items-center pl-[4px]">
              <span className="font-bold text-[#666] text-[11.5px] mr-[8px]">1.2</span>
              <span>gdp</span>
              <div className="ml-auto w-[26px] h-full bg-[#f0f0f0] flex items-center justify-center"><Arrow /></div>
            </div>
            <Btn className="w-[29px] h-[29px] ml-[9px]">
              <span className="text-[22px] leading-none text-[#5c3a7e] font-['Liberation_Serif',serif]">ε</span>
            </Btn>
          </div>

          <div className="flex items-center h-[30px] mt-[9px]">
            <span className="w-[88px] shrink-0 mt-[1px]">Symbol</span>
            <div className="flex-1 h-full bg-[#f5f5f5] border border-[#bdbdbd] rounded-[3px] p-[3px_5px_3px_6px]">
              <div className="w-full h-full bg-[#86b56f] border border-[#333]" />
            </div>
            <Btn className="w-[14px] h-[30px] ml-[1px]"><Arrow /></Btn>
          </div>

          <div className="flex items-center h-[26px] mt-[10px]">
            <span className="w-[88px] shrink-0">Legend format</span>
            <div className="w-[573px] h-full bg-white border border-[#bdbdbd] rounded-[3px] flex items-center pl-[3px]">%1 - %2</div>
            <div className="w-[99px] h-full ml-[9px] bg-white border border-[#bdbdbd] rounded-[3px] flex items-center overflow-hidden">
              <span className="ml-[2px] text-[11.5px] w-[44px] overflow-hidden whitespace-nowrap shrink-0">ecision 0</span>
              <svg width="17" height="13" viewBox="0 0 17 13" className="ml-[6px] shrink-0">
                <path d="M5 0h12v13H5L0 6.500z" fill="#a8a8a8" />
                <path d="m7 3 7 7M14 3l-7 7" stroke="#fff" strokeWidth="1.600" />
              </svg>
              <span className="ml-auto h-full"><Spin /></span>
            </div>
            <span className="ml-[8px]"><CheckBox /></span>
            <span className="ml-[7px]">Trim</span>
          </div>

          <div className="flex items-center h-[26px] mt-[8px]">
            <span className="w-[88px] shrink-0 mt-[1px]">Color ramp</span>
            <div className="flex-1 h-full bg-[#f5f5f5] border border-[#bdbdbd] rounded-[3px] p-[2px_5px_2px_6px]">
              <div className="w-full h-full bg-[linear-gradient(90deg,#000004_0%,#1b0c41_16%,#4f127b_30%,#b73779_50%,#e4506e_62%,#fc8761_75%,#fdb57c_87%,#fcfdbf_100%)]" />
            </div>
            <Btn className="w-[14px] h-[26px] ml-[1px]"><Arrow /></Btn>
          </div>

          <div className="flex items-end h-[29px] mt-[9px] border-b-2 border-[#c4c4c4] pl-0">
            <div className="w-[72px] h-[30px] -mb-[2px] bg-[#fbfbfb] border border-b-0 border-[#c4c4c4] rounded-t-[3px] flex items-center justify-center">Classes</div>
            <div className="w-[85px] h-[25px] bg-[#f0f0f0] border border-b-0 border-[#c4c4c4] rounded-t-[3px] flex items-center justify-center">Histogram</div>
          </div>

          <div className="h-[496px] mt-[13px] bg-white border-b border-x border-[#c8c8c8] flex flex-col shrink-0">
            <div className="h-[24px] shrink-0 flex bg-linear-to-b from-[#fafafa] to-[#efefef] border-b-2 border-[#c8c8c8] text-[14.5px] items-center">
              <div className="w-[84px] h-full pl-[2px] pt-[3px] border-r border-[#d0d0d0] flex items-center">
                Symbol
                <span className="ml-auto mr-[2px] mb-[8px]"><Arrow /></span>
              </div>
              <div className="w-[150px] h-full pl-[3px] pt-[3px] border-r border-[#d0d0d0] flex items-center">Values</div>
              <div className="pl-[3px] pt-[3px]">Legend</div>
            </div>
            {classes.map(([color, range, label]) => (
              <div key={label} className="h-[22.5px] shrink-0 flex items-center text-[14.4px]">
                <span className="ml-[4px]"><CheckBox /></span>
                <span className="w-[20px] h-[20px] ml-[8px] border border-[#444] shrink-0" style={{ background: color }} />
                <span className="ml-[41px] w-[150px] shrink-0 whitespace-nowrap">{range}</span>
                <span className="ml-[-1px]">{label}</span>
              </div>
            ))}
          </div>

          <div className="flex items-center h-[29px] mt-[8px]">
            <span className="w-[38px] mt-[1px]">Mode</span>
            <Btn className="h-[29px] w-[187px] !justify-start pl-[5px] text-[12.3px]">
              <Icon name="quantile" s={18} />
              <span className="ml-[2px]">Equal Count (Quantile)</span>
              <span className="ml-[11px]"><Arrow /></span>
            </Btn>
            <span className="ml-auto mt-[1px]">Classes</span>
            <div className="ml-[9px] w-[82px] h-[24px] bg-white border border-[#bdbdbd] rounded-[3px] flex items-center pl-[5px]">
              5
              <span className="ml-auto h-full"><Spin /></span>
            </div>
          </div>

          <div className="flex items-center h-[29px] mt-[10px]">
            <Btn className="w-[100px] h-[25px]">Classify</Btn>
            <Btn className="w-[35px] h-[29px] ml-[7px]">
              <svg width="20" height="20" viewBox="0 0 20 20">
                <path d="M7 1h6v6h6v6h-6v6H7v-6H1V7h6z" fill="#e2efe0" stroke="#5e9468" strokeWidth="1.500" />
              </svg>
            </Btn>
            <Btn className="w-[35px] h-[29px] ml-[8px]">
              <span className="w-[18px] h-[10px] bg-[#f0a0a0] border border-[#d84848] flex items-center justify-center">
                <span className="w-[12px] h-[2px] bg-white" />
              </span>
            </Btn>
            <Btn className="w-[100px] h-[25px] ml-[7px]">Delete All</Btn>
            <Btn className="w-[99px] h-[25px] ml-auto relative">
              <span className="mr-[14px]">Advanced</span>
              <span className="absolute right-[2px] top-[6px] scale-75"><Arrow /></span>
            </Btn>
          </div>

          <div className="flex items-center h-[17px] mt-[10px]">
            <CheckBox />
            <span className="ml-[6px] mt-[2px] text-[11.7px]">Link class boundaries</span>
          </div>

          <div className="flex items-center h-[20px] mt-[23px] pl-[6px] font-bold">
            <span className="block w-0 h-0 border-y-[7px] border-y-transparent border-l-[9px] border-l-[#333]" />
            <span className="ml-[11px] mt-[1px]">Layer Rendering</span>
          </div>

          <div className="flex items-center h-[26px] mt-[11px] gap-[8px]">
            <Btn className="w-[100px] h-full relative mr-auto">
              <span className="mr-[14px]">Style</span>
              <span className="absolute right-[2px] top-[6px] scale-75"><Arrow /></span>
            </Btn>
            <Btn className="w-[99px] h-full !border-[#5ea2e0] !from-[#f3f8fd] !to-[#e9f2fa]">OK</Btn>
            <Btn className="w-[99px] h-full">Cancel</Btn>
            <Btn className="w-[100px] h-full">Apply</Btn>
            <Btn className="w-[99px] h-full">Help</Btn>
          </div>
        </div>
      </div>
    </div>
  );
}

export default function App() {
  return (
    <div className="relative w-[1919px] h-[1020px] overflow-hidden bg-[#f0f0f0] flex flex-col text-[#111] font-['Open_Sans','Noto_Sans',sans-serif]">
      {/* window title */}
      <div className="h-[29px] shrink-0 bg-[#f3f3f3] flex items-center pl-[2px] text-[14.5px] text-[#8a8a8a]">
        <QgisLogo s={22} />
        <span className="ml-[4px]">*Untitled Project — QGIS</span>
        <svg width="12" height="12" viewBox="0 0 12 12" className="ml-auto mr-[46px]"><path d="M0 6h12" stroke="#8a8a8a" /></svg>
        <svg width="12" height="12" viewBox="0 0 12 12" className="mr-[46px]">
          <rect x=".5" y="2.500" width="9" height="9" rx="1.500" fill="none" stroke="#8a8a8a" />
          <path d="M3 2V1h7.500a1 1 0 0 1 1 1v8H10" fill="none" stroke="#8a8a8a" />
        </svg>
        <X size={15} strokeWidth={1} className="mr-[23px] text-[#777]" />
      </div>

      {/* menu */}
      <div className="h-[25px] shrink-0 bg-[#efefef] flex items-center text-[14px] text-[#9a9a9a] border-b border-[#d8d8d8] pl-[13px] gap-[18.4px]">
        <span>Project</span>
        <span><u>E</u>dit</span>
        <span><u>V</u>iew</span>
        <span><u>L</u>ayer</span>
        <span><u>S</u>ettings</span>
        <span><u>P</u>lugins</span>
        <span>Vect<u>o</u>r</span>
        <span>Raster</span>
      </div>

      {/* toolbars */}
      <div className="h-[49px] shrink-0 flex items-center bg-linear-to-b from-[#fbfbfb] to-[#f0f0f0] border-b border-[#c8c8c8] pl-[6px]">
        <Grip />
        <div className="ml-[4px]" />
        {['newFile', 'open', 'save', 'print', 'layoutMgr', 'style'].map((n) => <Tool key={n} name={n} />)}
        <span className="ml-[9px]"><Grip /></span>
        <div className="w-[39px] h-[38px] ml-[9px] bg-[#e2e2e2] border border-[#bcbcbc] rounded-[3px] flex items-center justify-center">
          <Hand size={28} fill="#fff" strokeWidth={1.5} className="text-black" />
        </div>
        <Tool name="pan" />
        <Tool name="zoomIn" />
        <Tool name="zoomOut" />
        <div className="ml-auto flex items-center mr-[338px]">
          <Arrow color="border-t-[#555]" />
          <Tool name="comment" />
          <Tool name="gearRun" s={30} />
          <span className="ml-[4px]"><Arrow color="border-t-[#a8a8a8]" /></span>
        </div>
      </div>
      <div className="h-[49px] shrink-0 flex items-center bg-linear-to-b from-[#fbfbfb] to-[#f0f0f0] border-b border-[#c8c8c8] pl-[6px]">
        <Grip />
        <div className="ml-[5px]" />
        {['addLayer', 'box', 'vertex', 'feather', 'chip', 'mesh', 'virtual'].map((n) => <Tool key={n} name={n} />)}
        <span className="ml-[7px]"><Grip /></span>
        <div className="ml-[10px]" />
        <Tool name="editAll" />
        <Tool name="pencil" />
        <Tool name="saveEdits" />
        <span className="ml-auto mr-[420px]"><Grip /></span>
      </div>
      <div className="h-[47px] shrink-0 flex items-center bg-linear-to-b from-[#fbfbfb] to-[#f0f0f0] border-b-2 border-[#c4c4c4] pl-[6px] pt-[1px]">
        <Grip />
        <div className="ml-[4px]" />
        {['kml', 'kmz', 'html', 'quad', 'mapGrid'].map((n) => <Tool key={n} name={n} s={30} />)}
      </div>

      {/* main area */}
      <div className="flex flex-1 min-h-0">
        <div className="w-[376px] shrink-0 pr-[9px] flex flex-col border-r border-[#d0d0d0]">
          {/* browser panel */}
          <div className="h-[32px] shrink-0 flex items-center pl-[5px] text-[14.5px]">
            Browser
            <DockButtons />
          </div>
          <div className="h-[32px] shrink-0 flex items-center pl-[9px] pb-[4px] gap-[12px]">
            {['newLayer', 'refresh', 'filter', 'collapse', 'info'].map((n) => <Icon key={n} name={n} s={20} />)}
          </div>
          <div className="h-[326px] shrink-0 bg-white border border-[#b4b4b4] flex overflow-hidden">
            <div className="flex-1 pt-[1px] overflow-hidden">
              {browserRows.map(([icon, name, depth, open]) => (
                <div
                  key={name}
                  className={`h-[22.5px] flex items-center text-[14.5px] whitespace-nowrap relative ${name === 'OpenStreetMap' ? 'bg-[#efefef] w-[227px]' : ''} ${depth ? 'pl-[44px]' : 'pl-[24px]'}`}
                >
                  {open && <span className="absolute left-[6px] top-[8px]"><Arrow /></span>}
                  <Icon name={icon} s={20} />
                  <span className="ml-[8px]">{name}</span>
                </div>
              ))}
            </div>
            <div className="w-[17px] shrink-0 flex flex-col bg-white border-l border-[#e8e8e8]">
              <div className="h-[17px] flex items-center justify-center border-b border-[#d0d0d0]"><Arrow dir="up" /></div>
              <div className="h-[114px] bg-[#e6e6e6]" />
              <div className="flex-1" />
              <div className="h-[18px] flex items-center justify-center border-t border-[#d0d0d0]"><Arrow /></div>
            </div>
          </div>

          {/* layers panel */}
          <div className="h-[33px] shrink-0 flex items-center pl-[5px] text-[14.5px] mt-[1px]">
            <span className="mt-[6px]">Layers</span>
            <DockButtons />
          </div>
          <div className="h-[36px] shrink-0 flex items-center pl-[10px] gap-[12px]">
            {['brush', 'addGroup', 'eye', 'filter', 'exprFilter'].map((n) => <Icon key={n} name={n} s={20} />)}
            <span className="-ml-[7px]"><Arrow /></span>
            <span className="-ml-[2px]"><Icon name="expand" s={20} /></span>
            <Icon name="collapse" s={20} />
            <Icon name="removeLayer" s={20} />
          </div>
          <div className="flex-1 min-h-0 bg-white border border-[#b4b4b4] flex overflow-hidden">
            <div className="flex-1 overflow-hidden pt-[1px]">
              <div className="h-[23px] bg-[#f0f0f0] flex items-center relative pl-[29px]">
                <span className="absolute left-[8px] top-[9px]"><Arrow /></span>
                <CheckBox />
                <span className="ml-[7px]"><Icon name="polygon" s={20} /></span>
                <span className="ml-[9px] font-bold underline text-[13.7px]">Peta_Tematik</span>
                <span className="ml-auto mr-[5px] w-[20px] h-[20px] border border-[#ddd] rounded-[2px] flex items-center justify-center bg-[#f6f6f6]"><Icon name="chipSmall" s={18} /></span>
              </div>
              {classes.map(([color, , label]) => (
                <div key={label} className="h-[30px] flex items-center pl-[54px] text-[14.5px]">
                  <CheckBox />
                  <span className="w-[28px] h-[28px] ml-[8px] border border-[#222] shrink-0" style={{ background: color }} />
                  <span className="ml-[7px]">{label}</span>
                </div>
              ))}
              <div className="h-[22px] flex items-center relative pl-[29px]">
                <span className="absolute left-[11px] top-[6px]"><Arrow dir="right" /></span>
                <CheckBox on={false} />
                <span className="ml-[7px]"><Icon name="polygon" s={20} /></span>
                <span className="ml-[8px] font-bold italic text-[#7c7c7c] text-[14.5px]">Peta_Tematik2</span>
                <span className="ml-auto mr-[5px] w-[20px] h-[20px] border border-[#ddd] rounded-[2px] flex items-center justify-center bg-[#f6f6f6]"><Icon name="chipSmall" s={18} /></span>
              </div>
              {layerRows.map(([color, label]) => (
                <div key={label} className="h-[22.5px] flex items-center pl-[29px] font-bold text-[14px]">
                  <CheckBox />
                  <span className="w-[20px] h-[20px] ml-[8px] border border-[#555] shrink-0" style={{ background: color }} />
                  <span className="ml-[8px]">{label}</span>
                </div>
              ))}
            </div>
            <div className="w-[17px] shrink-0 flex flex-col bg-white border-l border-[#e8e8e8]">
              <div className="h-[17px] flex items-center justify-center border-b border-[#d0d0d0]"><Arrow dir="up" /></div>
              <div className="flex-1" />
              <div className="h-[25px] bg-[#e6e6e6]" />
              <div className="h-[17px] flex items-center justify-center border-t border-[#d0d0d0]"><Arrow /></div>
            </div>
          </div>
        </div>

        {/* map with message bar */}
        <div className="flex-1 flex flex-col min-w-0">
          <div className="h-[39px] shrink-0 bg-[#dfefd9] border-y border-[#b4c2a8] flex items-center">
            <svg width="30" height="26" viewBox="0 0 30 26" className="ml-[12px]">
              <path d="M2 10l5-2 5 7L28 1 13 25z" fill="#35c62f" stroke="#1a7d17" />
            </svg>
            <span className="ml-[8px] font-bold text-[14px]">Layer</span>
            <span className="ml-auto italic text-[13px] mr-[24px]">1 more</span>
            <span className="w-[22px] h-[22px] rounded-full bg-[#2f2f2f] flex items-center justify-center mr-[5px]">
              <X size={15} strokeWidth={4} className="text-white" />
            </span>
            <span className="mr-[13px]"><Arrow /></span>
          </div>
          <div className="flex-1 relative bg-[#aad3df] overflow-hidden">
            <MapCanvas />
          </div>
        </div>
      </div>

      {/* status bar */}
      <div className="h-[36px] shrink-0 bg-[#f0f0f0] border-t border-[#d0d0d0] flex items-center text-[13.5px] whitespace-nowrap">
        <div className="ml-[5px] w-[250px] h-[27px] shrink-0 bg-white border border-[#c0c0c0] rounded-[3px] flex items-center pl-[10px] text-[#8a8a8a]">
          <Search size={18} strokeWidth={1.5} />
          <span className="ml-[8px] text-[13px]">Type to locate (Ctrl+K)</span>
        </div>
        <span className="ml-[10px] w-[654px] shrink-0">Toggles the editing state of the current layer</span>
        <span className="w-[71px] shrink-0">Coordinate</span>
        <div className="w-[137px] h-[26px] shrink-0 border border-[#bdbdbd] rounded-[3px] flex items-center justify-center">11627194&nbsp;&nbsp;-892931</div>
        <span className="w-[42px] shrink-0 pl-[5px]"><Icon name="mouseOff" s={22} /></span>
        <span className="w-[36px] shrink-0">Scale</span>
        <div className="w-[95px] h-[26px] shrink-0 border border-[#bdbdbd] rounded-[3px] flex items-center overflow-hidden">
          <span className="-ml-[2px]">1:4245103</span>
          <span className="ml-auto w-[18px] h-full border-l border-[#bdbdbd] flex items-center justify-center"><Arrow /></span>
        </div>
        <span className="w-[43px] shrink-0 pl-[13px]"><Icon name="lock" s={22} /></span>
        <span className="w-[60px] shrink-0">Magnifier</span>
        <div className="w-[100px] h-[26px] shrink-0 bg-[#f4f4f4] border border-[#bdbdbd] rounded-[3px] flex items-center pl-[3px]">
          100%
          <span className="ml-auto h-full"><Spin /></span>
        </div>
        <span className="ml-[13px] w-[62px] shrink-0">Rotation</span>
        <div className="w-[100px] h-[26px] shrink-0 bg-white border border-[#bdbdbd] rounded-[3px] flex items-center pl-[5px]">
          0,0 °
          <span className="ml-auto h-full"><Spin /></span>
        </div>
        <span className="ml-[9px]"><CheckBox /></span>
        <span className="ml-[7px] w-[62px] shrink-0">Render</span>
        <span className="w-[22px] shrink-0"><Icon name="globe" s={20} /></span>
        <span className="w-[96px] shrink-0">EPSG:3857</span>
        <Icon name="chat" s={20} />
      </div>

      <LayerDialog />
    </div>
  );
}
